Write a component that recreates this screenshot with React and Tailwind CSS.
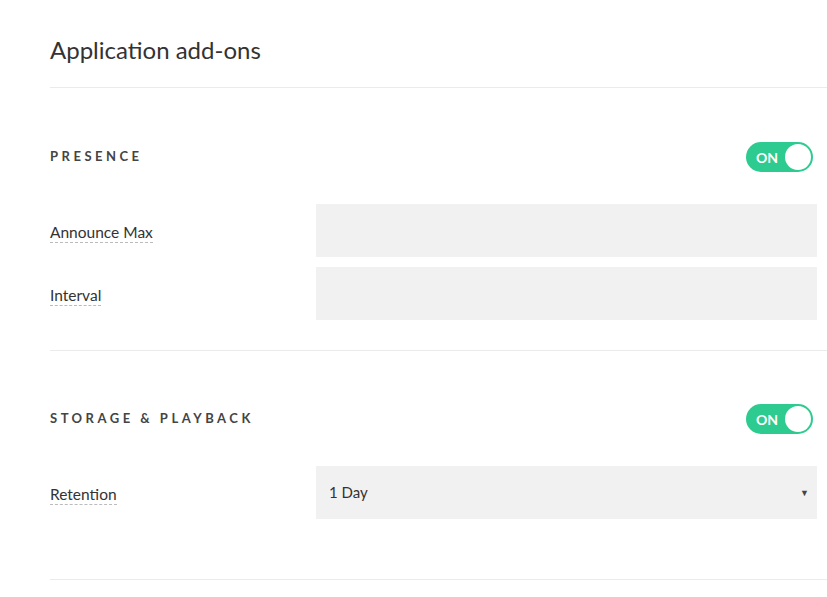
const font = { fontFamily: 'Lato, "Open Sans", Arial, sans-serif' };

function Toggle() {
  return (
    <div className="relative w-[67px] h-[30px] rounded-full bg-[#2dcb8f] flex items-center">
      <span className="pl-[10px] text-white text-[14px] font-bold">ON</span>
      <span className="absolute right-[2px] top-[2px] w-[26px] h-[26px] rounded-full bg-white" />
    </div>
  );
}

function Label({ children }) {
  return (
    <span className="text-[15.5px] text-[#333] border-b border-dashed border-[#bbb] leading-[20px] pb-[1px]">
      {children}
    </span>
  );
}

function Row({ label, children, className }) {
  return (
    <div className={'flex items-center ' + (className || '')}>
      <div className="w-[266px] pt-[2px]">
        <Label>{label}</Label>
      </div>
      {children}
    </div>
  );
}

function SectionHead({ title }) {
  return (
    <div className="flex items-center justify-between pr-[14px]">
      <h3 className="text-[13px] font-bold tracking-[3.5px] text-[#444]">{title}</h3>
      <Toggle />
    </div>
  );
}

export default function App() {
  return (
    <div className="w-[827px] h-[597px] bg-white pl-[50px] overflow-hidden" style={font}>
      <div className="h-[88px] flex items-center border-b border-[#ebebeb] pt-[12px]">
        <h1 className="text-[24px] text-[#333]">Application add-ons</h1>
      </div>

      <div className="pt-[54px] pb-[30px] border-b border-[#ebebeb]">
        <SectionHead title="PRESENCE" />
        <Row label="Announce Max" className="mt-[32px]">
          <div className="w-[501px] h-[53px] bg-[#f1f1f1]" />
        </Row>
        <Row label="Interval" className="mt-[10px]">
          <div className="w-[501px] h-[53px] bg-[#f1f1f1]" />
        </Row>
      </div>

      <div className="pt-[53px] pb-[60px] border-b border-[#ebebeb]">
        <SectionHead title="STORAGE & PLAYBACK" />
        <Row label="Retention" className="mt-[32px]">
          <div className="w-[501px] h-[53px] bg-[#f1f1f1] flex items-center justify-between pl-[13px] pr-[8px]">
            <span className="text-[15px] text-[#333]">1 Day</span>
            <span className="text-[9px] text-[#444]">▼</span>
          </div>
        </Row>
      </div>
    </div>
  );
}
